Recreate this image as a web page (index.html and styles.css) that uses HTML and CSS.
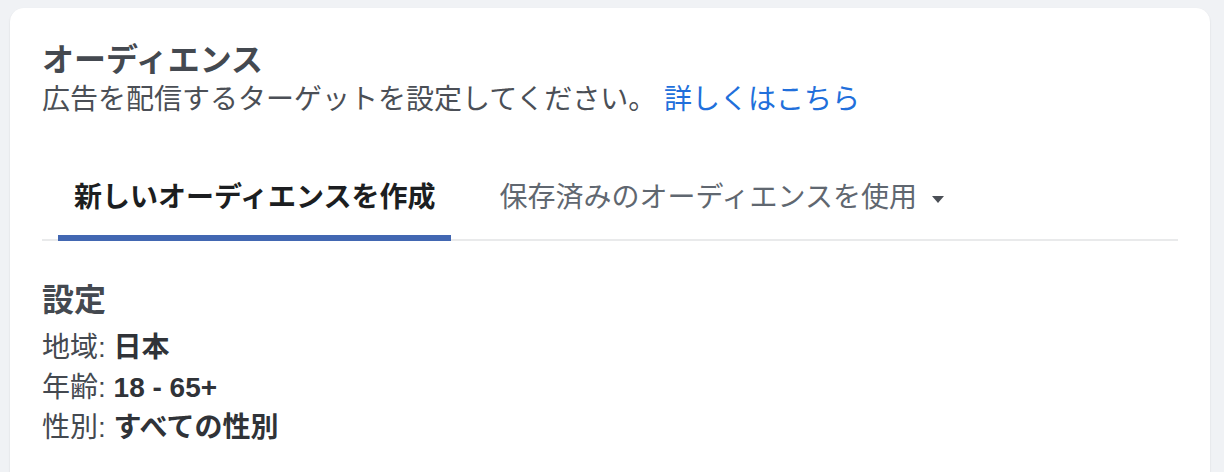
FILE: index.html
```html
<!DOCTYPE html>
<html lang="ja">
<head>
<meta charset="utf-8">
<link rel="stylesheet" href="styles.css">
</head>
<body>
<div class="card">
  <h1 class="title">オーディエンス</h1>
  <p class="subtitle">広告を配信するターゲットを設定してください。 <a class="link" href="#">詳しくはこちら</a></p>
  <div class="tabs">
    <div class="tab tab-active">新しいオーディエンスを作成</div>
    <div class="tab">保存済みのオーディエンスを使用<span class="caret"></span></div>
  </div>
  <h2 class="section">設定</h2>
  <ul class="rows">
    <li>地域: <b>日本</b></li>
    <li>年齢: <b>18 - 65+</b></li>
    <li>性別: <b>すべての性別</b></li>
  </ul>
</div>
</body>
</html>
```

FILE: styles.css
```css
html, body {
  margin: 0;
  padding: 0;
  background: #f0f2f5;
  font-family: "Liberation Sans", "Noto Sans CJK JP", sans-serif;
  height: 100%;
  overflow: hidden;
}
body {
  padding: 8px 14px 0 10px;
  box-sizing: border-box;
}
.card {
  background: #fff;
  border-radius: 14px;
  box-shadow: 0 1px 2px rgba(0,0,0,0.12);
  padding: 32px 32px 40px 32px;
  min-height: 500px;
}
.title {
  margin: 0;
  font-size: 32px;
  line-height: 40px;
  font-weight: 700;
  color: #444950;
}
.subtitle {
  margin: 0;
  font-size: 28px;
  line-height: 40px;
  color: #4b4f56;
}
.link {
  color: #216fdb;
  text-decoration: none;
}
.tabs {
  display: flex;
  gap: 32px;
  margin-top: 39px;
  padding-left: 16px;
  border-bottom: 2px solid #e9eaeb;
}
.tab {
  display: flex;
  align-items: center;
  padding: 19px 16px 17px 16px;
  font-size: 28px;
  line-height: 40px;
  color: #606770;
  border-bottom: 6px solid transparent;
  margin-bottom: -2px;
}
.tab-active {
  font-weight: 700;
  color: #1c1e21;
  border-bottom-color: #4267b2;
}
.caret {
  width: 0;
  height: 0;
  border-left: 6px solid transparent;
  border-right: 6px solid transparent;
  border-top: 7px solid #4b4f56;
  margin-left: 15px;
  margin-top: 2px;
}
.section {
  margin: 39px 0 0 0;
  font-size: 32px;
  line-height: 40px;
  font-weight: 700;
  color: #444950;
}
.rows {
  list-style: none;
  margin: 8px 0 0 0;
  padding: 0;
  font-size: 28px;
  line-height: 40px;
  color: #444950;
}
.rows b {
  font-weight: 700;
  color: #303338;
}
```
